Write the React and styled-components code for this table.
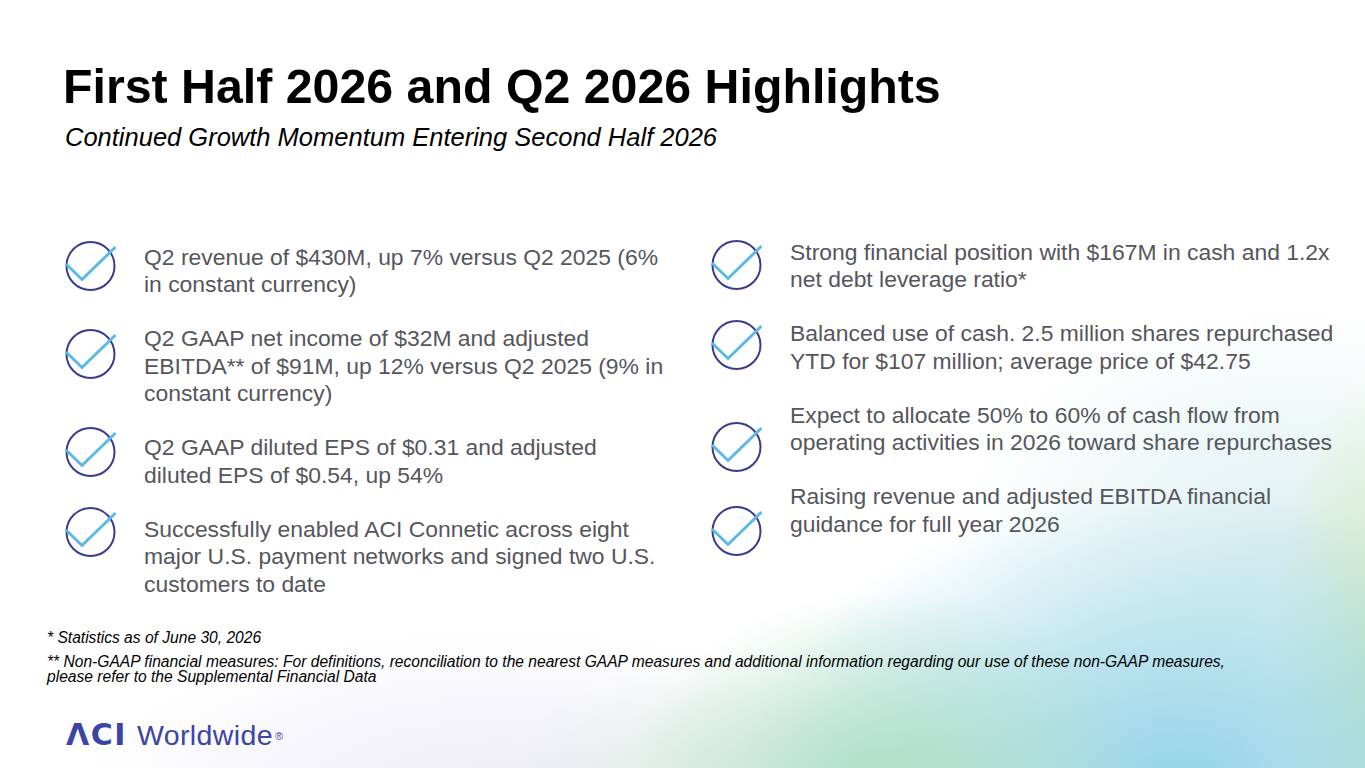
import React from "react";
import styled, { createGlobalStyle } from "styled-components";

const leftItems = [
  { lines: ["Q2 revenue of $430M, up 7% versus Q2 2025 (6%", "in constant currency)"], shift: -3 },
  {
    lines: [
      "Q2 GAAP net income of $32M and adjusted",
      "EBITDA** of $91M, up 12% versus Q2 2025 (9% in",
      "constant currency)"
    ],
    shift: 3.5
  },
  { lines: ["Q2 GAAP diluted EPS of $0.31 and adjusted", "diluted EPS of $0.54, up 54%"], shift: -7.5 },
  {
    lines: [
      "Successfully enabled ACI Connetic across eight",
      "major U.S. payment networks and signed two U.S.",
      "customers to date"
    ],
    shift: -9
  }
];

const rightItems = [
  { lines: ["Strong financial position with $167M in cash and 1.2x", "net debt leverage ratio*"], shift: 1 },
  {
    lines: ["Balanced use of cash. 2.5 million shares repurchased", "YTD for $107 million; average price of $42.75"],
    shift: -0.5
  },
  {
    lines: ["Expect to allocate 50% to 60% of cash flow from", "operating activities in 2026 toward share repurchases"],
    shift: 20
  },
  { lines: ["Raising revenue and adjusted EBITDA financial", "guidance for full year 2026"], shift: 22.5 }
];

function CheckIcon({ shift }) {
  return (
    <IconBox $shift={shift}>
      <svg width="52" height="52" viewBox="0 0 52 52">
        <circle cx="25.5" cy="25" r="24" fill="none" stroke="#3a3b8e" strokeWidth="2" />
        <polyline
          points="1,23 17,38.5 50.5,6"
          fill="none"
          stroke="#5bb9e6"
          strokeWidth="3"
          strokeLinejoin="miter"
        />
      </svg>
    </IconBox>
  );
}

function Item({ lines, shift }) {
  return (
    <Row>
      <CheckIcon shift={shift} />
      <ItemText>
        {lines.map((l, i) => (
          <React.Fragment key={i}>
            {l}
            {i < lines.length - 1 && <br />}
          </React.Fragment>
        ))}
      </ItemText>
    </Row>
  );
}

export default function App() {
  return (
    <>
      <GlobalStyle />
      <Slide>
        <Title>First Half 2026 and Q2 2026 Highlights</Title>
        <Subtitle>Continued Growth Momentum Entering Second Half 2026</Subtitle>

        <Columns>
          <Column $top={5}>
            {leftItems.map((it, i) => (
              <Item key={i} {...it} />
            ))}
          </Column>
          <Column $top={0}>
            {rightItems.map((it, i) => (
              <Item key={i} {...it} />
            ))}
          </Column>
        </Columns>

        <Notes>
          <Note>* Statistics as of June 30, 2026</Note>
          <Note>
            ** Non-GAAP financial measures: For definitions, reconciliation to the nearest GAAP measures and
            additional information regarding our use of these non-GAAP measures,
            <br />
            please refer to the Supplemental Financial Data
          </Note>
        </Notes>

        <Logo>
          <LogoMark>ΛCI</LogoMark>
          <LogoWord>Worldwide</LogoWord>
          <LogoReg>®</LogoReg>
        </Logo>
      </Slide>
    </>
  );
}

const GlobalStyle = createGlobalStyle`
  html, body {
    margin: 0;
    padding: 0;
    background: #fff;
  }
  * {
    box-sizing: border-box;
  }
`;

const Slide = styled.div`
  width: 1365px;
  height: 768px;
  overflow: hidden;
  padding: 58px 0 0 0;
  display: flex;
  flex-direction: column;
  font-family: "Liberation Sans", Arial, sans-serif;
  background:
    radial-gradient(ellipse 260px 200px at 890px 790px, rgba(172, 222, 194, 1), rgba(172, 222, 194, 0) 100%),
    radial-gradient(ellipse 440px 300px at 1180px 790px, rgba(144, 210, 230, 1), rgba(144, 210, 230, 0.6) 45%, rgba(144, 210, 230, 0) 100%),
    radial-gradient(ellipse 110px 320px at 1380px 690px, rgba(206, 232, 186, 0.95), rgba(206, 232, 186, 0) 100%),
    radial-gradient(ellipse 330px 230px at 1290px 540px, rgba(214, 236, 236, 0.8), rgba(214, 236, 236, 0) 100%),
    radial-gradient(ellipse 200px 140px at 700px 800px, rgba(216, 236, 222, 0.8), rgba(216, 236, 222, 0) 100%),
    radial-gradient(ellipse 420px 170px at 500px 800px, rgba(232, 230, 242, 0.85), rgba(232, 230, 242, 0) 100%),
    #ffffff;
`;

const Title = styled.h1`
  margin: 0 0 0 63px;
  font-size: 48.3px;
  line-height: 56px;
  font-weight: 700;
  color: #000;
`;

const Subtitle = styled.h2`
  margin: 7.7px 0 0 65px;
  font-size: 25.5px;
  line-height: 30px;
  font-weight: 400;
  font-style: italic;
  color: #000;
`;

const Columns = styled.div`
  display: grid;
  grid-template-columns: 646px 1fr;
  margin-top: 87.3px;
  padding-left: 65px;
`;

const Column = styled.div`
  display: flex;
  flex-direction: column;
  gap: 26.5px;
  padding-top: ${(p) => p.$top}px;
`;

const Row = styled.div`
  display: flex;
  align-items: flex-start;
  gap: 27px;
`;

const IconBox = styled.div`
  flex: none;
  width: 52px;
  height: 52px;
  margin-top: ${(p) => p.$shift}px;
  margin-bottom: ${(p) => -p.$shift}px;

  svg {
    display: block;
  }
`;

const ItemText = styled.p`
  margin: 0;
  font-size: 22.9px;
  line-height: 27.5px;
  color: #55565c;
  white-space: nowrap;
`;

const Notes = styled.div`
  margin: 31.5px 0 0 47px;
  display: flex;
  flex-direction: column;
  gap: 8.5px;
`;

const Note = styled.p`
  margin: 0;
  font-size: 15.6px;
  line-height: 15.5px;
  font-style: italic;
  color: #000;
  white-space: nowrap;
`;

const Logo = styled.div`
  margin: 34px 0 0 66px;
  display: flex;
  align-items: baseline;
  color: #3b45a6;
  line-height: 32px;
`;

const LogoMark = styled.span`
  font-family: "DejaVu Sans", sans-serif;
  font-weight: 700;
  font-size: 30px;
  letter-spacing: 1.5px;
  margin-right: 10px;
`;

const LogoWord = styled.span`
  font-family: "Liberation Sans", Arial, sans-serif;
  font-size: 28.5px;
  letter-spacing: 0.4px;
`;

const LogoReg = styled.span`
  font-size: 11px;
  align-self: flex-start;
  margin: 1px 0 0 2px;
`;
